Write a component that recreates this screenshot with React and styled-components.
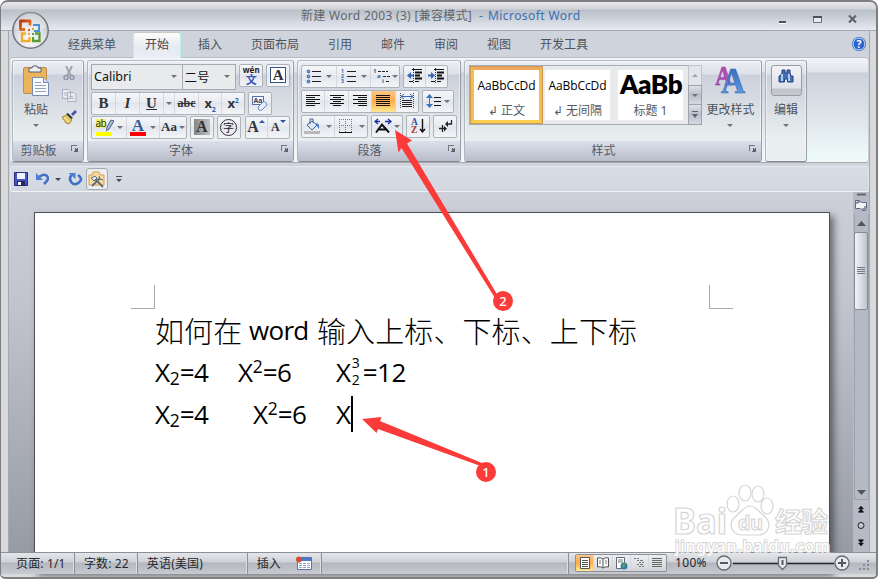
import React from 'react'
import styled, { createGlobalStyle, css } from 'styled-components'

const GlobalStyle = createGlobalStyle`
  * { box-sizing: border-box; }
  body {
    margin: 0;
    background: #fff;
    font-family: 'Noto Sans', 'Noto Sans CJK SC', sans-serif;
    font-size: 12px;
    color: #4c535c;
  }
`

const Window = styled.div`
  position: relative;
  display: flex;
  flex-direction: column;
  width: 878px;
  height: 579px;
  overflow: hidden;
  background: #d9d9db;
  border: 1px solid #7d7f83;
  border-width: 2px 2px 2px 1px;
  border-radius: 8px 8px 5px 5px;
`

/* ---------- title bar ---------- */

const TitleBar = styled.header`
  flex: none;
  display: flex;
  align-items: center;
  height: 29px;
  padding: 0 17px 0 300px;
  border-bottom: 1px solid #a3a9ba;
  background: linear-gradient(#e9e9eb 0, #d2d3d7 7px, #b8c0c9 8px, #c6cbd3 14px, #e5e8f1 27px);
  line-height: 28px;
  white-space: pre;
`

const DocTitle = styled.span`
  width: 187px;
  color: #62666c;
  letter-spacing: 0.3px;
`

const AppTitle = styled.span`
  color: #3a70b4;
  letter-spacing: 0.42px;
`

const WindowButtons = styled.div`
  display: flex;
  gap: 23px;
  margin-left: auto;
  padding-top: 8px;
`

/* ---------- frame body ---------- */

const Body = styled.div`
  flex: none;
  display: flex;
  flex-direction: column;
  height: 521px;
  margin: 0 6px 0 7px;
  border-left: 1px solid #a5a8ae;
  border-right: 1px solid #a5a8ae;
  background: #cfd3dc;
`

const TabBar = styled.nav`
  flex: none;
  display: flex;
  height: 26px;
  padding: 1px 2px 0 42px;
`

const Tab = styled.div`
  width: ${p => p.$w}px;
  height: 26px;
  line-height: 26px;
  text-align: center;
  white-space: nowrap;
  ${p => p.$active && css`
    position: relative;
    border: 1px solid #b3f0ee;
    border-top-color: #c9c9c6;
    border-bottom: 0;
    border-radius: 3px 3px 0 0;
    background: linear-gradient(#fbfbf8, #e6e9f0 60%, #eceef5);
    line-height: 24px;
    color: #41464e;
  `}
`

const HelpSlot = styled.div`
  margin: 4px 0 0 auto;
  height: 18px;
`

/* ---------- ribbon ---------- */

const Ribbon = styled.section`
  flex: none;
  display: flex;
  height: 106px;
  margin: 0 0 0 1px;
  padding: 2px 1px 0;
  gap: 3px;
  border: 1px solid #c0c2c6;
  border-color: #bcbec2 #c9ccd4 #a7a9ae #e4e6ea;
  border-radius: 4px;
  background: linear-gradient(#f3f5f8 0, #dfe3ea 14px, #ccd1dc 15px, #dfe5ea 60px, #eefafa 98px);
`

const Group = styled.div`
  display: flex;
  flex-direction: column;
  width: ${p => p.$w}px;
  height: 102px;
  border: 1px solid #a0a5ad;
  border-color: #b7bbc2 #999da5 #85888f #b2b6be;
  border-radius: 3px;
  background: linear-gradient(#eceff3 0, #dde1e9 13px, #cbd0dc 14px, #e9eeee 78px);
  box-shadow: inset 0 0 0 1px rgba(255, 255, 255, 0.45);
`

const GroupBody = styled.div`
  flex: 1;
  display: flex;
  flex-direction: ${p => (p.$row ? 'row' : 'column')};
  gap: ${p => p.$gap || 0}px;
  padding: ${p => p.$pt || 4}px 3px 0 ${p => p.$pl || 3}px;
`

const GroupLabel = styled.div`
  flex: none;
  display: flex;
  height: 20px;
  padding-right: 4px;
  background: linear-gradient(#dbe0eb, #b9bdca);
  border-radius: 0 0 2px 2px;
  line-height: 20px;
  color: #555b66;
  span { flex: 1; text-align: center; padding-right: 6px; }
`

const ToolRow = styled.div`
  display: flex;
  height: ${p => p.$h || 23}px;
  gap: 3px;
`

const ButtonSet = styled.div`
  display: flex;
  width: ${p => p.$w}px;
  height: 23px;
  margin-left: ${p => p.$ml || 0}px;
  border: 1px solid #aeb2b9;
  border-radius: 2px;
  background: linear-gradient(#f5f6f9, #e8ebf0 45%, #e1e4eb 46%, #f3f5f8);
`

const Tool = styled.div`
  display: flex;
  align-items: center;
  justify-content: center;
  flex: ${p => (p.$w ? 'none' : 1)};
  width: ${p => p.$w}px;
  padding-bottom: 1px;
  border-left: 1px solid #d4d7dd;
  &:first-child { border-left: 0; }
  ${p => p.$on && css`
    background: linear-gradient(#fbc78a, #fca94b 45%, #fdc561 70%, #ffe796);
  `}
`

const Glyph = styled.span`
  font-family: 'Liberation Serif', serif;
  font-size: ${p => p.$size || 15}px;
  font-weight: bold;
  font-style: ${p => (p.$italic ? 'italic' : 'normal')};
  text-decoration: ${p => p.$deco || 'none'};
  line-height: 18px;
  color: ${p => p.$color || '#303236'};
  sub, sup { font: bold 7px 'Noto Sans', sans-serif; color: #2765b8; line-height: 0; }
`

const SansGlyph = styled(Glyph)`
  font-family: 'Noto Sans', sans-serif;
  letter-spacing: -0.3px;
`

const Inked = styled.span`
  display: flex;
  flex-direction: column;
  align-items: center;
  width: 16px;
  border-bottom: 4px solid ${p => p.$ink};
  line-height: 12px;
  ${Glyph} { line-height: 13px; }
`

const Marker = styled.span`
  display: flex;
  width: 16px;
  height: 13px;
  b {
    width: 10px;
    height: 9px;
    background: #f5ef6a;
    font: 10px/8px 'Noto Sans', sans-serif;
    letter-spacing: -0.6px;
    color: #2c2c20;
  }
`

const ShadedA = styled.span`
  width: 16px;
  height: 16px;
  background: linear-gradient(90deg, #868686, #c2c2c2);
  text-align: center;
  ${Glyph} { line-height: 16px; display: block; }
`

const FramedA = styled.span`
  width: 16px;
  height: 16px;
  border: 1px solid #37547f;
  background: #fff;
  text-align: center;
  ${Glyph} { line-height: 14px; display: block; }
`

const CircledChar = styled.span`
  width: 17px;
  height: 17px;
  border: 1px solid #333;
  border-radius: 50%;
  color: #222;
  font: 11px/14px 'Noto Sans CJK SC', sans-serif;
  text-align: center;
`

const Phonetic = styled.span`
  display: flex;
  flex-direction: column;
  align-items: center;
  color: #222;
  font: bold 8px/8px 'Noto Sans', sans-serif;
  b { color: #3558b5; font: bold 11px/11px 'Noto Sans CJK SC', sans-serif; }
`

const Combo = styled.div`
  display: flex;
  align-items: center;
  justify-content: space-between;
  width: ${p => p.$w}px;
  height: 26px;
  margin-right: ${p => p.$mr || 0}px;
  padding: 0 5px 2px 2px;
  border: 1px solid #a6abb3;
  background: #e8eaec;
  color: #111;
  font-size: 12.5px;
`

const Arrow = styled.i`
  width: 0;
  border: 3px solid transparent;
  border-top-color: ${p => p.$color || '#6f747c'};
  border-bottom: 0;
  margin: ${p => p.$m || 0};
`

const BigButton = styled.div`
  display: flex;
  flex-direction: column;
  align-items: center;
  width: ${p => p.$w}px;
  margin-left: ${p => p.$ml || 0}px;
  white-space: nowrap;
`

const Caption = styled.span`
  line-height: 18px;
  margin: ${p => p.$mt}px 0 5px;
`

const SmallIcons = styled.div`
  display: flex;
  flex-direction: column;
  gap: 6px;
  padding: 0 0 0 5px;
`

const Gallery = styled.div`
  display: flex;
  width: 220px;
  height: 60px;
  border: 1px solid #a7adb7;
  background: #e9eaec;
`

const StyleCell = styled.div`
  display: flex;
  flex: none;
  flex-direction: column;
  align-items: ${p => (p.$left ? 'flex-start' : 'center')};
  width: ${p => (p.$on ? 73 : 65)}px;
  height: ${p => (p.$on ? 58 : 50)}px;
  margin: ${p => (p.$on ? '0 2px 0 0' : '4px 8px 0 0')};
  padding-top: ${p => (p.$left ? 0 : 3)}px;
  border: ${p => (p.$on ? '4px solid #f4ad3d' : 0)};
  border-color: #efa75c #f6bd4d #fbcf4d #f6bd4d;
  outline: ${p => (p.$on ? '1px solid #c99b55' : 0)};
  outline-offset: -1px;
  background: #fff;
  overflow: hidden;
  white-space: nowrap;
  color: #000;
  small { width: 100%; text-align: center; font-size: 12px; line-height: 18px; color: #555a62; }
`

const Sample = styled.span`
  font-family: 'Open Sans', 'Noto Sans', sans-serif;
  font-size: 12px;
  letter-spacing: -0.1px;
  line-height: 25px;
  height: 29px;
`

const BigSample = styled(Sample)`
  padding-left: 2px;
  font-family: Lato, sans-serif;
  font-size: 26px;
  font-weight: 800;
  letter-spacing: -0.4px;
  line-height: 28px;
  height: 32px;
`

const Scroller = styled.div`
  display: flex;
  flex-direction: column;
  width: 14px;
  height: 60px;
  margin-left: -1px;
  div {
    flex: 1;
    display: flex;
    align-items: center;
    justify-content: center;
    border: 1px solid #9da3ae;
    margin-bottom: -1px;
    background: linear-gradient(#dfe2e9, #b9becb 50%, #d5d9e2);
  }
  div:first-child { background: #e3e5ea; border-color: #c0c4cb; }
  div:last-child { margin: 0; }
`

const EditTile = styled.div`
  display: flex;
  justify-content: center;
  width: 31px;
  height: 31px;
  padding-top: 3px;
  border: 1px solid #999da3;
  border-radius: 3px;
  background: linear-gradient(#f2f3f6 0, #dfe2ea 22px, #c2c4c9 23px, #c9cacd);
`

/* ---------- quick access ---------- */

const QuickBar = styled.div`
  flex: none;
  display: flex;
  align-items: center;
  height: 26px;
  margin: 3px 0 0 1px;
  padding-left: 2px;
  border: 1px solid #e4e7ed;
  border-bottom-color: #f0f2f5;
  border-radius: 3px;
  background: linear-gradient(#d9dde6, #d3d7e0);
`

const QuickTile = styled.div`
  display: flex;
  align-items: center;
  justify-content: center;
  width: 22px;
  height: 22px;
  margin: 0 8px 0 3px;
  border: 1px solid #a5a9b0;
  border-radius: 3px;
  background: #eceef1;
`

/* ---------- document ---------- */

const Workspace = styled.main`
  flex: none;
  display: flex;
  height: 360px;
  background: linear-gradient(#cdd0d9 0, #c2c5cf 30%, #979ba4);
`

const Page = styled.article`
  width: 796px;
  height: 360px;
  margin: 20px 23px 0 25px;
  padding: 72px 96px 0;
  border: 1px solid #4d4f54;
  border-bottom: 0;
  background: #fff;
  box-shadow: 4px 4px 7px rgba(40, 42, 50, 0.6);
`

const Margins = styled.div`
  display: flex;
  justify-content: space-between;
  width: 602px;
`

const Corner = styled.i`
  width: 24px;
  height: 24px;
  border-bottom: 1px solid #a9a9a9;
  ${p => (p.$right ? 'border-left' : 'border-right')}: 1px solid #a9a9a9;
`

const Line = styled.p`
  display: flex;
  align-items: center;
  height: 42px;
  margin: 0;
  padding-left: 24px;
  color: #000;
  white-space: nowrap;
`

const Hanzi = styled.span`
  width: ${p => p.$w}px;
  font-family: 'Noto Sans CJK SC', sans-serif;
  font-weight: 300;
  font-size: 29px;
  letter-spacing: 0.1px;
`

const Seg = styled.span`
  display: ${p => (p.$row ? 'flex' : 'block')};
  align-items: center;
  width: ${p => p.$w}px;
  font-family: 'Open Sans', sans-serif;
  font-size: 26px;
  letter-spacing: ${p => p.$ls || -0.4}px;
  font-weight: ${p => p.$weight || 400};
  sub, sup { font-size: 17.5px; line-height: 0; letter-spacing: 0; }
  sub { vertical-align: -3px; }
  sup { vertical-align: 9px; }
`

const Stack = styled.span`
  display: flex;
  flex-direction: column;
  width: 12px;
  padding-left: 1px;
  margin-bottom: 2px;
  font-size: 14px;
  line-height: 17px;
`

const Caret = styled.i`
  width: 2px;
  height: 36px;
  background: #000;
`

const ScrollColumn = styled.aside`
  display: flex;
  flex-direction: column;
  align-items: center;
  width: 16px;
  background: #b7bac6;
`

const Thumb = styled.div`
  display: flex;
  flex: none;
  align-items: center;
  justify-content: center;
  width: 14px;
  height: 78px;
  margin-bottom: auto;
  border: 1px solid #868b95;
  border-radius: 2px;
  background: linear-gradient(90deg, #f0f1f4, #d9dce3 50%, #bfc3cd);
`

const Track = styled.div`
  display: flex;
  flex-direction: column;
  align-items: center;
  width: 15px;
  height: 286px;
  padding-bottom: 3px;
  border: 1px solid #9ea2ab;
  border-top: 0;
  background: #b5b9c5;
`

/* ---------- status bar ---------- */

const StatusBar = styled.footer`
  flex: none;
  display: flex;
  height: 22px;
  border-top: 1px solid #8c8f95;
  background: linear-gradient(#e5e6ea 0, #cfd1d7 9px, #b4b7bf 10px, #c7cacf 21px);
  color: #26282c;
`

const Status = styled.div`
  display: flex;
  align-items: center;
  gap: 15px;
  width: ${p => p.$w}px;
  padding-left: ${p => p.$pl}px;
  border-right: 1px solid #8d9097;
  box-shadow: inset -1px 0 #dcdee2;
  letter-spacing: 0.15px;
  line-height: 20px;
  white-space: nowrap;
`

const Views = styled.div`
  display: flex;
  width: 92px;
  height: 18px;
  margin: 1px 0 0 6px;
  border: 1px solid #8d9097;
  border-radius: 2px;
  background: linear-gradient(#eceef0, #d2d4d9);
  ${Tool} { padding: 0; }
`

const Percent = styled.span`
  width: 41px;
  margin-left: 8px;
  letter-spacing: 0.3px;
  line-height: 20px;
`

const Watermark = styled.div`
  position: absolute;
  left: 672px;
  top: 482px;
`

const Overlay = styled.svg`
  position: absolute;
  left: -1px;
  top: -2px;
`

const Orb = styled.svg`
  position: absolute;
  left: 10px;
  top: 9px;
`

const Drawing = styled.svg`
  flex: none;
`

const Svg = ({ w = 16, h = 16, children, ...rest }) => (
  <Drawing width={w} height={h} viewBox={`0 0 ${w} ${h}`} fill="none" {...rest}>{children}</Drawing>
)

const Launcher = () => (
  <Svg w={9} h={18} shapeRendering="crispEdges">
    <path d="M1.5 10V4.5H7" stroke="#70757e" />
    <path d="M8 6v5H3l2-2-1-1 1-1 1 1z" fill="#5c616a" />
  </Svg>
)

// x start and length of every stripe, top to bottom
const Lines = ({ rows, step = 2, color = '#111' }) => (
  <Svg shapeRendering="crispEdges">
    {rows.map(([x, len], i) => (
      <path key={i} d={`M${x} ${2.5 + i * step}h${len}`} stroke={color} />
    ))}
  </Svg>
)

const full = [[1, 14], [1, 14], [1, 14], [1, 14], [1, 14], [1, 14]]

const PasteIcon = () => (
  <Svg w={30} h={33}>
    <rect x="2.5" y="2.5" width="23" height="26" rx="1.5" fill="#edb35a" stroke="#bc8e50" />
    <path d="M8 3h3l1-2h4l1 2h3v4H8z" fill="#eee" stroke="#53627a" />
    <path d="M11.5 12.5h11l5 5v13h-16z" fill="#fafcff" stroke="#758db5" />
    <path d="M22.5 12.5v5h5" fill="#d3def2" stroke="#758db5" />
    <path d="M14 17.5h6M14 20.5h11M14 23.5h11M14 26.5h11" stroke="#90a3c0" />
  </Svg>
)

const CutIcon = () => (
  <Svg>
    <path d="M5 1l5 10M11 1L6 11" stroke="#a1a5b0" strokeWidth="2" />
    <circle cx="5" cy="12.5" r="2" stroke="#9297a9" strokeWidth="1.5" />
    <circle cx="11" cy="12.5" r="2" stroke="#9297a9" strokeWidth="1.5" />
  </Svg>
)

const CopyIcon = () => (
  <Svg>
    <path d="M1.5 2.5h6l2 2v7h-8zM6.5 5.5h6l2.5 2.5v6.5h-8.5z" fill="#e9e9f1" stroke="#b0adc4" />
    <path d="M3 6h3M3 8h3M8 9.5h4M8 11.5h5" stroke="#b9b6cb" />
  </Svg>
)

const BrushIcon = () => (
  <Svg>
    <path d="M10 5l4-4 2 2-4 4z" fill="#4a52ad" />
    <path d="M7 4l5 5-2 1-5-5z" fill="#30343a" />
    <path d="M1 8l5-2 5 5-3 4-3-1z" fill="#e5c868" stroke="#a88a37" />
    <path d="M3 8l5 5" stroke="#fff2b1" />
  </Svg>
)

const Bullets = ({ numbered }) => (
  <Svg w={15}>
    {[3, 8, 13].map((y, i) => (
      <g key={y}>
        {numbered
          ? <text x="0" y={y + 1.8} fontSize="5" fontWeight="bold" fill="#2c61b0">{i + 1}</text>
          : <circle cx="2.5" cy={y + 0.5} r="1.4" stroke="#2e5c9e" fill="#87a9dc" />}
        <path d={`M6 ${y + 0.5}h9`} stroke="#222" />
      </g>
    ))}
  </Svg>
)

const MultiLevel = () => (
  <Svg w={18}>
    <g fontSize="6" fontWeight="bold" fill="#2c61b0">
      <text x="0" y="5">1</text><text x="4" y="10">a</text><text x="9" y="14.5">i</text>
    </g>
    <path d="M5 3.5h10M10 8.5h7M13 13.5h4" stroke="#222" strokeDasharray="3 1" />
  </Svg>
)

const Indent = ({ right }) => (
  <Svg w={17}>
    <path d="M6 1.5h10M9 13.5h4M3 13.5h4" stroke="#111" />
    <path d="M9 4.5h7M9 7.5h5M9 10.5h7" stroke="#111" strokeWidth="2" />
    <path d="M7.5 0v16" stroke="#333" strokeDasharray="1 1" />
    <path d={right ? 'M0 6.5h3V4l4 3.5L3 11V8.5H0z' : 'M8 6.5H5V4L1 7.5 5 11V8.5h3z'} fill="#3568bb" />
  </Svg>
)

const Distribute = () => (
  <Svg>
    <path d="M1.5 0v16M14.5 0v16" stroke="#444" strokeDasharray="1 1" />
    <path d="M2 3.5h12M5 1L2 3.5 5 6M11 1l3 2.5L11 6" stroke="#3567b6" />
    <path d="M3 7.5h10M3 9.5h10M3 11.5h10M3 13.5h10" stroke="#222" />
  </Svg>
)

const Spacing = () => (
  <Svg>
    <path d="M3.5 4v9" stroke="#3971bb" />
    <path d="M0 5l3.5-4L7 5zM0 11l3.5 4L7 11z" fill="#3971bb" />
    <path d="M8 4.5h7M8 8.5h7M8 12.5h7" stroke="#111" />
  </Svg>
)

const Bucket = () => (
  <Svg w={17}>
    <path d="M3 7l5-4 5 4-5 5z" fill="#dfe8f5" stroke="#446595" />
    <path d="M6 6V1h3v4" stroke="#446595" />
    <path d="M12 5q4 0 3 6l-2-3z" fill="#447dca" />
    <path d="M0 13h16v3H0z" fill="#b9b9b9" />
  </Svg>
)

const Borders = () => (
  <Svg>
    <path d="M1.5 1v13M7.5 1v13M13.5 1v13M1 1.5h13M1 7.5h13" stroke="#777" strokeDasharray="1 1" />
    <path d="M1 14.5h13" stroke="#111" />
  </Svg>
)

const AsianLayout = () => (
  <Svg w={18}>
    <path d="M2 14.5l6-8 7 8M5 11.5h8" stroke="#111" strokeWidth="2" />
    <path d="M1 3.5h5M11 3.5h6M4 1L1 3.5 4 6M14 1l3 2.5L14 6" stroke="#1c2dad" strokeWidth="1.3" />
  </Svg>
)

const SortIcon = () => (
  <Svg h={18}>
    <g fontFamily="Liberation Serif" fontSize="9.5" fontWeight="bold">
      <text x="1" y="8" fill="#31559f">A</text><text x="1" y="16" fill="#a43736">Z</text>
    </g>
    <path d="M12.5 2v13M10 12l2.5 3 2.5-3" stroke="#111" strokeWidth="1.4" />
  </Svg>
)

const MarksIcon = () => (
  <Svg>
    <path d="M14.5 2v4H9M2 10.5h6M5.5 7v7" stroke="#222" strokeWidth="1.3" />
    <path d="M11 3v6L8 6zM7 8v5.5l3-3z" fill="#222" />
  </Svg>
)

const EraserIcon = () => (
  <Svg w={18} h={17}>
    <rect x="1.5" y="1.5" width="11" height="8" fill="#f8faff" stroke="#5870a7" />
    <text x="2.5" y="8" fontSize="7" fontWeight="bold" fill="#354665">Aa</text>
    <path d="M7 12l5-5q2-1 3 1l1 2-5 5q-2 1-3 0z" fill="#e8effd" stroke="#6988be" />
  </Svg>
)

const PenIcon = () => (
  <Svg w={8} h={12}>
    <path d="M0 10l5-9 3 1-5 8-3 2z" fill="#a9c0df" stroke="#3f577d" />
  </Svg>
)

const ChangeStyles = () => (
  <Svg w={31} h={33}>
    <defs>
      <linearGradient id="blueA" x2="0" y2="1"><stop stopColor="#315fae" /><stop offset="1" stopColor="#69aaf2" /></linearGradient>
    </defs>
    <g fontFamily="Liberation Serif" fontWeight="bold">
      <text x="0" y="20" fontSize="27" fill="#b74cb9" stroke="#863d99" strokeWidth=".5" textLength="17" lengthAdjust="spacingAndGlyphs">A</text>
      <text x="6" y="28" fontSize="35" fill="url(#blueA)" stroke="#3364b3" strokeWidth=".6" textLength="24" lengthAdjust="spacingAndGlyphs">A</text>
    </g>
  </Svg>
)

const Binoculars = () => (
  <Svg w={16} h={17}>
    <path d="M4 1h3v3h2V1h3v3l1 3h2v6H9.5v-3h-3v3H1V7h1l2-3z" fill="#4470b8" stroke="#27427c" />
    <path d="M4 5v7M11 5v7" stroke="#cfe0fb" strokeWidth="1.6" />
  </Svg>
)

const SaveIcon = () => (
  <Svg>
    <path d="M1.5 1.5h13v13h-13z" fill="#4853c5" stroke="#292c82" />
    <path d="M4 2h8v6H4z" fill="#edf3ff" />
    <path d="M4 10h8v5H4z" fill="#202866" />
    <path d="M5 11h3v3H5z" fill="#fff" />
  </Svg>
)

const UndoIcon = () => (
  <Svg>
    <path d="M4 6q5-4 8-1t-3 8" stroke="#3e70c7" strokeWidth="2.5" />
    <path d="M1 2v7h7z" fill="#4c80d6" />
  </Svg>
)

const RedoIcon = () => (
  <Svg>
    <path d="M4.5 4Q1.500 8 4.500 11.500t7.500 0T11 4" stroke="#3e70c7" strokeWidth="2.6" />
    <path d="M1.500 2h7v6z" fill="#4c80d6" />
  </Svg>
)

const ToolsIcon = () => (
  <Svg w={18} h={18}>
    <path d="M1 5h3l1-3h6l1 3h4v10H1z" fill="#f8dc9f" stroke="#d9a04a" />
    <path d="M4 16l8-8M6 8l9 9" stroke="#5f6977" strokeWidth="1.8" />
    <path d="M3 8l4-2 2 2-3 3zM11 6l1 3 3 1" fill="#dfe6ef" stroke="#5f6977" />
  </Svg>
)

const OfficeOrb = () => (
  <Orb width="40" height="40" viewBox="0 0 40 40" fill="none">
    <defs>
      <radialGradient id="orb" cx=".5" cy=".75" r=".75">
        <stop stopColor="#fff" /><stop offset=".55" stopColor="#dedfe2" /><stop offset="1" stopColor="#afb2b7" />
      </radialGradient>
      <linearGradient id="redSq" x2="1" y2="1"><stop stopColor="#c23113" /><stop offset="1" stopColor="#f28a24" /></linearGradient>
    </defs>
    <circle cx="19.5" cy="19.5" r="17.7" fill="url(#orb)" stroke="#73777c" strokeWidth="1.5" />
    <path d="M4 17a15 15 0 0131 0q-15 5-31 0" fill="#fff" opacity=".35" />
    <path d="M14 18.5H9.5V10H19v4.5" stroke="url(#redSq)" strokeWidth="2.8" strokeLinejoin="round" />
    <path d="M22 14h6v6h-5" stroke="#4b94d4" strokeWidth="2" />
    <path d="M15 22.5h-4V30h7.5v-4" stroke="#f3ac27" strokeWidth="2.3" />
    <path d="M24 22.5h4.5V30H22v-4" stroke="#5a9c36" strokeWidth="2.3" />
    <path d="M17 18h2v2h-2z" fill="#df531e" />
    <path d="M21 17h2v2h-2zM17 22h2v2h-2z" fill="#eda32a" />
    <path d="M21 22h2v2h-2z" fill="#619b3c" />
  </Orb>
)

const HelpIcon = () => (
  <Svg>
    <circle cx="8" cy="8" r="6.7" fill="#2b61d2" stroke="#5884bb" />
    <circle cx="8" cy="8" r="5.8" stroke="#d9e6ff" strokeWidth=".8" />
    <text x="8" y="12" textAnchor="middle" fontSize="10.5" fontWeight="bold" fill="#fff">?</text>
  </Svg>
)

const tabs = [
  ['经典菜单', 82], ['开始', 48, true], ['插入', 58], ['页面布局', 72],
  ['引用', 58], ['邮件', 48], ['审阅', 58], ['视图', 48], ['开发工具', 82],
]

const FontGroup = () => (
  <Group $w={207}>
    <GroupBody $pt={3}>
      <ToolRow $h={28}>
        <Combo $w={92} $mr={-4}>Calibri<Arrow /></Combo>
        <Combo $w={55}>二号<Arrow /></Combo>
        <ButtonSet $w={24}><Tool><Phonetic>wén<b>文</b></Phonetic></Tool></ButtonSet>
        <ButtonSet $w={24}><Tool><FramedA><Glyph $size={15}>A</Glyph></FramedA></Tool></ButtonSet>
      </ToolRow>
      <ToolRow $h={24}>
        <ButtonSet $w={154}>
          <Tool $w={23}><Glyph>B</Glyph></Tool>
          <Tool $w={24}><Glyph $italic>I</Glyph></Tool>
          <Tool $w={24}><Glyph $deco="underline">U</Glyph></Tool>
          <Tool $w={11}><Arrow /></Tool>
          <Tool $w={24}><Glyph $size={12} $deco="line-through">abc</Glyph></Tool>
          <Tool><SansGlyph $size={13}>x<sub>2</sub></SansGlyph></Tool>
          <Tool><SansGlyph $size={13}>x<sup>2</sup></SansGlyph></Tool>
        </ButtonSet>
        <ButtonSet $w={24}><Tool><EraserIcon /></Tool></ButtonSet>
      </ToolRow>
      <ToolRow>
        <ButtonSet $w={97}>
          <Tool $w={34}>
            <Inked $ink="#ffff00"><Marker><b>ab</b><PenIcon /></Marker></Inked>
            <Arrow $m="0 0 0 5px" />
          </Tool>
          <Tool $w={33}>
            <Inked $ink="#fb0000"><Glyph $size={17} $color="#3a5a96">A</Glyph></Inked>
            <Arrow $m="0 0 0 4px" />
          </Tool>
          <Tool><Glyph $size={13}>Aa</Glyph><Arrow $m="0 0 0 2px" /></Tool>
        </ButtonSet>
        <ButtonSet $w={24}><Tool><ShadedA><Glyph $size={16}>A</Glyph></ShadedA></Tool></ButtonSet>
        <ButtonSet $w={24}><Tool><CircledChar>字</CircledChar></Tool></ButtonSet>
        <ButtonSet $w={46} $ml={1}>
          <Tool>
            <Glyph $size={16}>A</Glyph>
            <Svg w={6} h={16}><path d="M0 4l3-3 3 3z" fill="#28589c" /></Svg>
          </Tool>
          <Tool>
            <Glyph $size={12}>A</Glyph>
            <Svg w={6} h={16}><path d="M0 1l3 3 3-3z" fill="#28589c" /></Svg>
          </Tool>
        </ButtonSet>
      </ToolRow>
    </GroupBody>
    <GroupLabel><span>字体</span><Launcher /></GroupLabel>
  </Group>
)

const ParagraphGroup = () => (
  <Group $w={164}>
    <GroupBody $gap={2}>
      <ToolRow>
        <ButtonSet $w={99}>
          <Tool $w={34}><Bullets /><Arrow $m="0 0 0 5px" /></Tool>
          <Tool $w={34}><Bullets numbered /><Arrow $m="0 0 0 5px" /></Tool>
          <Tool><MultiLevel /><Arrow $m="0 0 0 1px" /></Tool>
        </ButtonSet>
        <ButtonSet $w={45}><Tool><Indent /></Tool><Tool><Indent right /></Tool></ButtonSet>
      </ToolRow>
      <ToolRow>
        <ButtonSet $w={118}>
          <Tool><Lines rows={[[1, 14], [1, 9], [1, 14], [1, 9], [1, 14], [1, 9]]} /></Tool>
          <Tool><Lines rows={[[1, 14], [4, 8], [1, 14], [4, 8], [1, 14], [4, 8]]} /></Tool>
          <Tool><Lines rows={[[1, 14], [6, 9], [1, 14], [6, 9], [1, 14], [6, 9]]} /></Tool>
          <Tool $on><Lines rows={full} /></Tool>
          <Tool><Distribute /></Tool>
        </ButtonSet>
        <ButtonSet $w={32}><Tool><Spacing /><Arrow $m="0 0 0 2px" /></Tool></ButtonSet>
      </ToolRow>
      <ToolRow>
        <ButtonSet $w={67}>
          <Tool><Bucket /><Arrow $m="0 0 0 5px" /></Tool>
          <Tool><Borders /><Arrow $m="0 0 0 5px" /></Tool>
        </ButtonSet>
        <ButtonSet $w={32}><Tool><AsianLayout /><Arrow $m="0 0 0 2px" /></Tool></ButtonSet>
        <ButtonSet $w={24}><Tool><SortIcon /></Tool></ButtonSet>
        <ButtonSet $w={24}><Tool><MarksIcon /></Tool></ButtonSet>
      </ToolRow>
    </GroupBody>
    <GroupLabel><span>段落</span><Launcher /></GroupLabel>
  </Group>
)

const StylesGroup = () => (
  <Group $w={298}>
    <GroupBody $row $pl={4}>
      <Gallery>
        <StyleCell $on><Sample>AaBbCcDd</Sample><small>↲ 正文</small></StyleCell>
        <StyleCell><Sample>AaBbCcDd</Sample><small>↲ 无间隔</small></StyleCell>
        <StyleCell $left><BigSample>AaBb</BigSample><small>标题 1</small></StyleCell>
      </Gallery>
      <Scroller>
        <div><Svg w={6} h={3}><path d="M0 3l3-3 3 3z" fill="#9da2ab" /></Svg></div>
        <div><Arrow /></div>
        <div><Svg w={6} h={7}><path d="M0 0h6v1H0zM0 3h6L3 7z" fill="#5b616b" /></Svg></div>
      </Scroller>
      <BigButton $w={56} $ml={1}><ChangeStyles /><Caption $mt={3}>更改样式</Caption><Arrow /></BigButton>
    </GroupBody>
    <GroupLabel><span>样式</span><Launcher /></GroupLabel>
  </Group>
)

const Annotations = () => (
  <Overlay width="878" height="579" viewBox="0 0 878 579">
    <g fill="#fb3b39">
      <path d="M395 130l17 10.5-5 3L498 296l-3 2-93.5-150-3 4.500z" />
      <path d="M362 419l19.5-2-1.5 4 102 42-1.5 3L378 429l-1.5 4z" />
      <circle cx="503" cy="301" r="10" />
      <circle cx="486" cy="472" r="10" />
    </g>
    <g fill="#fff" fontSize="13" fontWeight="500" textAnchor="middle">
      <text x="503" y="305.5">2</text>
      <text x="486" y="476.5">1</text>
    </g>
  </Overlay>
)

const BaiduMark = () => (
  <Watermark>
    <svg width="160" height="76" viewBox="0 0 160 76" fill="#fff" stroke="#d6d6d6" strokeWidth="1.2">
      <ellipse cx="60" cy="20" rx="6" ry="8" />
      <ellipse cx="72" cy="9" rx="6" ry="8" />
      <ellipse cx="85" cy="10" rx="6" ry="8" />
      <ellipse cx="94" cy="22" rx="6" ry="8" />
      <path d="M77 22c6 0 9 6 15 11 7 6 4 17-6 18H68c-10-1-13-12-6-18 6-5 9-11 15-11z" />
      <g fontFamily="Noto Sans" fontWeight="bold">
        <text x="0" y="50" fontSize="35" textLength="54" lengthAdjust="spacingAndGlyphs">Bai</text>
        <text x="65" y="46" fontSize="20" textLength="25" lengthAdjust="spacingAndGlyphs">du</text>
        <text x="102" y="48" fontSize="27" fontFamily="Noto Sans CJK SC" textLength="53">经验</text>
        <text x="2" y="68" fontSize="16" fontWeight="500" strokeWidth="2" paintOrder="stroke" textLength="155">jingyan.baidu.com</text>
      </g>
    </svg>
  </Watermark>
)

const App = () => {
  return (
    <>
      <GlobalStyle />
      <Window>
        <TitleBar>
          <DocTitle>新建 Word 2003 (3) [兼容模式]  <AppTitle>-</AppTitle></DocTitle>
          <AppTitle>Microsoft Word</AppTitle>
          <WindowButtons>
            <Svg w={12} h={12}><path d="M2 8h7" stroke="#4c525c" strokeWidth="2" /><path d="M2 9.5h7" stroke="#fff" /></Svg>
            <Svg w={12} h={12}><path d="M1.5 3.5h8v5h-8z" fill="#e8ebf0" stroke="#67717e" /><path d="M1 3h9" stroke="#4b515b" strokeWidth="2" /></Svg>
            <Svg w={12} h={12}><path d="M2 1.5l7 7M9 1.5l-7 7" stroke="#58606e" strokeWidth="2" /></Svg>
          </WindowButtons>
        </TitleBar>
        <Body>
          <TabBar>
            {tabs.map(([name, w, active]) => <Tab key={name} $w={w} $active={active}>{name}</Tab>)}
            <HelpSlot><HelpIcon /></HelpSlot>
          </TabBar>
          <Ribbon>
            <Group $w={72}>
              <GroupBody $row>
                <BigButton $w={40}><PasteIcon /><Caption $mt={3}>粘贴</Caption><Arrow /></BigButton>
                <SmallIcons><CutIcon /><CopyIcon /><BrushIcon /></SmallIcons>
              </GroupBody>
              <GroupLabel><span>剪贴板</span><Launcher /></GroupLabel>
            </Group>
            <FontGroup />
            <ParagraphGroup />
            <StylesGroup />
            <Group $w={42}>
              <GroupBody $row>
                <BigButton $w={34}>
                  <EditTile><Binoculars /></EditTile>
                  <Caption $mt={5}>编辑</Caption>
                  <Arrow />
                </BigButton>
              </GroupBody>
            </Group>
          </Ribbon>
          <QuickBar>
            <SaveIcon />
            <Svg w={6} h={1} />
            <UndoIcon />
            <Arrow $m="0 6px 0 4px" $color="#41464e" />
            <RedoIcon />
            <QuickTile><ToolsIcon /></QuickTile>
            <Svg w={6} h={7}><path d="M0 0h6v1H0zM0 3h6L3 6z" fill="#4b5058" /></Svg>
          </QuickBar>
          <Workspace>
            <Page>
              <Margins><Corner /><Corner $right /></Margins>
              <Line>
                <Hanzi $w={94}>如何在</Hanzi>
                <Seg $w={68} $weight={500} $ls={-0.7}>word</Seg>
                <Hanzi>输入上标、下标、上下标</Hanzi>
              </Line>
              <Line>
                <Seg $w={83}>X<sub>2</sub>=4</Seg>
                <Seg $w={98}>X<sup>2</sup>=6</Seg>
                <Seg $row>X<Stack><span>3</span><span>2</span></Stack>=12</Seg>
              </Line>
              <Line>
                <Seg $w={98}>X<sub>2</sub>=4</Seg>
                <Seg $w={83}>X<sup>2</sup>=6</Seg>
                <Seg $w={15}>X</Seg>
                <Caret />
              </Line>
            </Page>
            <ScrollColumn>
              <Svg w={16} h={22}>
                <path d="M4 2.5h9" stroke="#62666e" strokeWidth="2" />
                <path d="M2.5 8.5h4l2 2h5v6l-1 2h-3l-2-2h-5z" fill="#f1f4f9" stroke="#5d6a80" />
                <path d="M4 12v-2h3M12 14v3H9" stroke="#39475f" />
              </Svg>
              <Track>
                <Svg w={13} h={18}><path d="M2 12l4.5-5 4.5 5z" fill="#50555e" /></Svg>
                <Thumb><Svg w={8} h={9}><path d="M0 .5h8M0 2.5h8M0 4.5h8M0 6.5h8" stroke="#757b86" /></Svg></Thumb>
                <Svg w={13} h={6}><path d="M2 0h9L6.5 5z" fill="#50555e" /></Svg>
              </Track>
              <Svg w={14} h={51}>
                <path d="M4.5 12L7 9l2.5 3zM4.5 9L7 6l2.5 3zM4.5 12.5h5" fill="#111" stroke="#111" strokeWidth=".5" />
                <circle cx="7" cy="25.5" r="3" fill="#c4c6cc" stroke="#222" />
                <path d="M4.5 40L7 43l2.5-3zM4.5 43L7 46l2.5-3zM4.5 39.5h5" fill="#111" stroke="#111" strokeWidth=".5" />
              </Svg>
            </ScrollColumn>
          </Workspace>
        </Body>
        <StatusBar>
          <Status $w={74} $pl={15}>页面: 1/1</Status>
          <Status $w={63} $pl={9}>字数: 22</Status>
          <Status $w={110} $pl={9}>英语(美国)</Status>
          <Status $w={74} $pl={9}>
            插入
            <Svg>
              <path d="M1.5 1.5h14v12h-14z" fill="#fff" stroke="#5874ae" />
              <path d="M2 2h13v3H2z" fill="#4979cc" />
              <path d="M3 7.5h11M3 9.5h11M3 11.5h11" stroke="#8da5cf" strokeDasharray="3 1" />
              <circle cx="3" cy="3.5" r="3" fill="#d94b31" />
            </Svg>
          </Status>
          <Status $w={248} />
          <Views>
            <Tool $on><Svg><path d="M3.5 2.5h9v11h-9z" fill="#fff" stroke="#555" /><path d="M5 5.5h6M5 7.5h6M5 9.5h6M5 11.5h6" stroke="#555" /></Svg></Tool>
            <Tool><Svg><path d="M2.5 3q3-1 5.5 1 2.5-2 5.5-1v9q-3-1-5.5 1-2.5-2-5.5-1zM8 4v9" fill="#fff" stroke="#555" /><path d="M4 6h2M4 8h2M10 6h2M10 8h2" stroke="#777" /></Svg></Tool>
            <Tool><Svg><path d="M3.5 2.5h8v11h-8z" fill="#fff" stroke="#667" /><path d="M5 5h5M5 7h5" stroke="#777" /><circle cx="11" cy="11" r="3.5" fill="#347bb2" /><path d="M9 10l3-2v3l-2 2z" fill="#5ca350" /></Svg></Tool>
            <Tool><Svg><path d="M3 3.5h5M6 5.5h6M8 7.5h5M6 9.5h6M8 11.5h5" stroke="#777" strokeDasharray="2 1 6 0" /></Svg></Tool>
            <Tool><Svg><path d="M3 3.5h10M3 5.5h10M3 7.5h10M3 9.5h10M3 11.5h10" stroke="#666" /></Svg></Tool>
          </Views>
          <Percent>100%</Percent>
          <Svg w={160} h={21}>
            <path d="M17 10.5h101" stroke="#26282c" strokeWidth="1.3" />
            <g fill="#e9eaed" stroke="#686c73" strokeWidth="1.3">
              <circle cx="8" cy="10" r="7" /><circle cx="126" cy="10" r="7" />
              <path d="M62.5 4.5h8v8l-4 4-4-4z" />
            </g>
            <path d="M4 10h8M122 10h8M126 6v8M66.5 7v5" stroke="#555960" strokeWidth="2" />
            <path d="M151 7h2v2h-2zM147 11h2v2h-2zM151 11h2v2h-2zM143 15h2v2h-2zM147 15h2v2h-2zM151 15h2v2h-2z" fill="#858991" />
          </Svg>
        </StatusBar>
        <OfficeOrb />
        <BaiduMark />
        <Annotations />
      </Window>
    </>
  )
}

export default App
